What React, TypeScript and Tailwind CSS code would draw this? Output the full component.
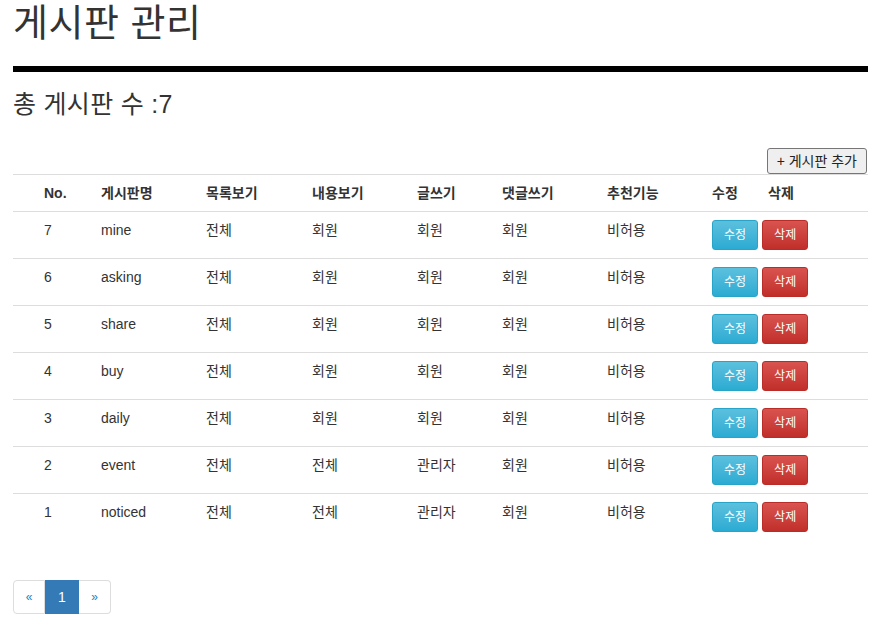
const boards = [
  { no: 7, name: 'mine', list: '전체', read: '회원', write: '회원', reply: '회원', rec: '비허용' },
  { no: 6, name: 'asking', list: '전체', read: '회원', write: '회원', reply: '회원', rec: '비허용' },
  { no: 5, name: 'share', list: '전체', read: '회원', write: '회원', reply: '회원', rec: '비허용' },
  { no: 4, name: 'buy', list: '전체', read: '회원', write: '회원', reply: '회원', rec: '비허용' },
  { no: 3, name: 'daily', list: '전체', read: '회원', write: '회원', reply: '회원', rec: '비허용' },
  { no: 2, name: 'event', list: '전체', read: '전체', write: '관리자', reply: '회원', rec: '비허용' },
  { no: 1, name: 'noticed', list: '전체', read: '전체', write: '관리자', reply: '회원', rec: '비허용' },
];

const cols = 'grid grid-cols-[31px_57px_105px_106px_105px_85px_105px_105px_56px_1fr]';

export default function App() {
  return (
    <div className="min-h-screen bg-white pl-[13px] pr-[10px] text-[14px] text-[#333] font-['Liberation_Sans','Noto_Sans_CJK_KR',sans-serif]">
      {/* Title */}
      <h1 className="text-[38px] leading-[46px] tracking-[0.5px] font-normal">게시판 관리</h1>
      <div className="mt-[20px] h-[6px] bg-black" />
      <h3 className="mt-[18px] text-[25px] leading-[28px] tracking-[0.3px] font-normal">총 게시판 수 :7</h3>

      {/* Add button */}
      <div className="mt-[30px] flex justify-end pr-px">
        <button className="h-[26px] px-[9px] rounded-[3px] border border-[#767676] bg-[#efefef] text-[14px] leading-none text-[#222]">
          + 게시판 추가
        </button>
      </div>

      {/* Table */}
      <div>
        <div className={`${cols} border-t border-[#ddd] py-2 leading-5 font-bold`}>
          <div />
          <div>No.</div>
          <div>게시판명</div>
          <div>목록보기</div>
          <div>내용보기</div>
          <div>글쓰기</div>
          <div>댓글쓰기</div>
          <div>추천기능</div>
          <div>수정</div>
          <div>삭제</div>
        </div>
        {boards.map((b) => (
          <div key={b.no} className={`${cols} h-[47px] border-t border-[#ddd] py-2 leading-5`}>
            <div />
            <div>{b.no}</div>
            <div>{b.name}</div>
            <div>{b.list}</div>
            <div>{b.read}</div>
            <div>{b.write}</div>
            <div>{b.reply}</div>
            <div>{b.rec}</div>
            <div className="col-span-2 flex gap-1">
              <button className="h-[30px] px-[11px] rounded-[3px] border border-[#28a4c9] bg-gradient-to-b from-[#5bc0de] to-[#2aabd2] text-white text-[12px]">
                수정
              </button>
              <button className="h-[30px] px-[11px] rounded-[3px] border border-[#b92c28] bg-gradient-to-b from-[#d9534f] to-[#c12e2a] text-white text-[12px]">
                삭제
              </button>
            </div>
          </div>
        ))}
      </div>

      {/* Pagination */}
      <div className="mt-[40px] flex h-[34px] w-fit text-[14px]">
        <span className="w-[32px] flex items-center justify-center border border-[#ddd] rounded-l-[4px] text-[#337ab7] text-[12px]">
          «
        </span>
        <span className="w-[34px] flex items-center justify-center border border-[#337ab7] bg-[#337ab7] text-white">
          1
        </span>
        <span className="w-[32px] flex items-center justify-center border border-[#ddd] border-l-0 rounded-r-[4px] text-[#337ab7] text-[12px]">
          »
        </span>
      </div>
    </div>
  );
}
